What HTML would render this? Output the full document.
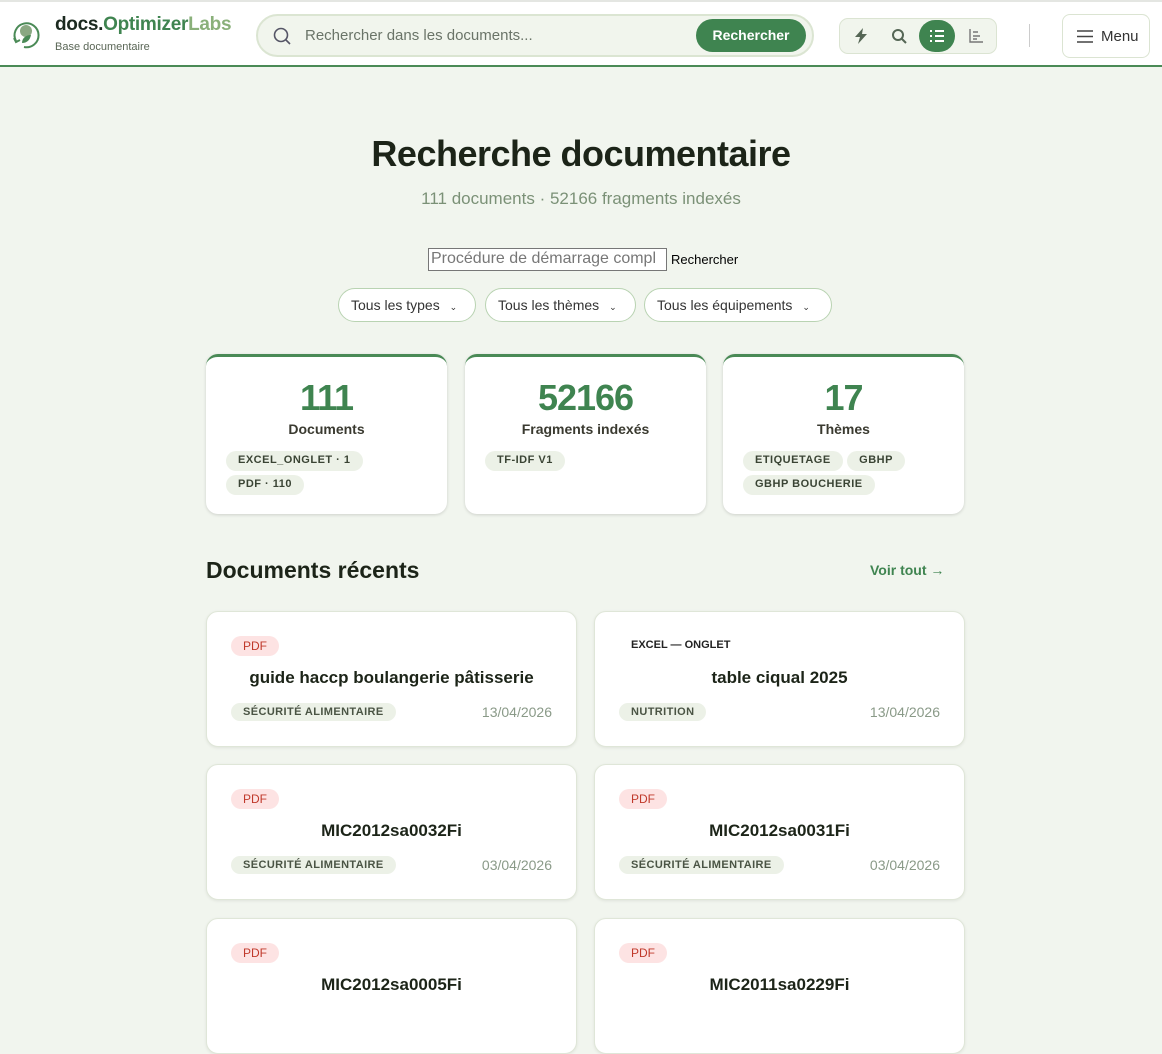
<!DOCTYPE html>
<html><head><meta charset="utf-8"><style>
*{box-sizing:border-box;margin:0;padding:0}
body{width:1162px;height:998px;overflow:hidden;background:#f1f5ee;font-family:"Liberation Sans",sans-serif;color:#1c2418;position:relative}
.hdr{position:absolute;left:0;top:0;width:1162px;height:67px;background:#fff;border-top:2px solid #e4e6e2;border-bottom:2px solid #4a8a56}
.abs{position:absolute}
.search{left:256px;top:12px;width:558px;height:43px;border:2px solid #dbe5d2;border-radius:22px;background:#f1f5ed}
.btn{position:absolute;right:6px;top:3px;width:110px;height:33px;background:#3f8450;color:#fff;border-radius:17px;font-weight:bold;font-size:14px;text-align:center;line-height:33px}
.tools{left:839px;top:16px;width:158px;height:36px;border:1px solid #dbe4d2;border-radius:9px;background:#f1f5ed}
.menu{left:1062px;top:12px;width:88px;height:44px;border:1px solid #dbe4d2;border-radius:8px;background:#fff;font-size:15px;color:#333}
.stat{position:absolute;top:354px;width:241px;height:160px;background:#fff;border-radius:12px;border-top:3px solid #4a8a56;box-shadow:0 1px 3px rgba(0,0,0,.15);text-align:center}
.stat .n{font-size:36px;font-weight:bold;color:#3f8450;margin-top:20px;letter-spacing:-1px}
.stat .l{font-size:14px;font-weight:bold;color:#3a3a30;margin-top:2px}
.tags{text-align:left;padding:0 20px;margin-top:13px}
.tag{display:inline-block;background:#ecf1e7;border-radius:10px;font-size:11px;font-weight:bold;color:#3a4434;padding:3px 12px;height:20px;margin:0 0 3px 0;letter-spacing:.5px}
.doc{position:absolute;width:371px;height:136px;background:#fff;border-radius:12px;border:1px solid #dfe6d8;box-shadow:0 1px 3px rgba(0,0,0,.08)}
.pdf{position:absolute;left:24px;top:24px;background:#fde3e3;color:#c0392b;font-size:12px;padding:3px 12px;border-radius:10px}
.xl{position:absolute;left:36px;top:27px;font-size:11px;font-weight:bold;color:#222}
.t{position:absolute;left:0;right:0;top:56px;text-align:center;font-size:17px;font-weight:bold;color:#1c2418}
.th{position:absolute;left:24px;top:91px;background:#ecf1e7;font-size:11px;font-weight:bold;color:#4a5444;padding:3px 12px;border-radius:10px;letter-spacing:.4px}
.dt{position:absolute;right:24px;top:92px;font-size:14px;color:#8a9a88}
.sel{position:absolute;top:288px;height:34px;border:1px solid #b9d3b2;border-radius:17px;background:#fff;font-size:14px;color:#333;line-height:32px;padding-left:12px}
</style></head><body>
<div class="hdr">
<svg class="abs" style="left:10px;top:17px" width="32" height="32" viewBox="0 0 32 32"><path d="M6 22A12 12 0 1 1 14 28" fill="none" stroke="#4a8a56" stroke-width="2"/><path d="M4 19l2 4 4-2" fill="none" stroke="#4a8a56" stroke-width="2"/><circle cx="16" cy="12" r="6" fill="#8aa882"/><path d="M12 24c0-5 4-8 9-8-1 5-4 8-9 8z" fill="#4a8a56"/></svg>
<div class="abs" style="left:55px;top:12px;font-size:19px;font-weight:bold;letter-spacing:-.3px"><span style="color:#1c2a20">docs.</span><span style="color:#3f8450">Optimizer</span><span style="color:#8ab07a">Labs</span></div>
<div class="abs" style="left:55px;top:39px;font-size:11px;color:#5a6656">Base documentaire</div>
<div class="abs search"><svg class="abs" style="left:14px;top:10px" width="20" height="20" viewBox="0 0 20 20"><circle cx="9" cy="9" r="6.5" fill="none" stroke="#556" stroke-width="1.6"/><path d="M14 14l4 4" stroke="#556" stroke-width="1.6"/></svg><div class="abs" style="left:47px;top:11px;font-size:15px;color:#6a7468">Rechercher dans les documents...</div><div class="btn">Rechercher</div></div>
<div class="abs tools">
<svg class="abs" style="left:14px;top:9px" width="14" height="16" viewBox="0 0 14 16"><path d="M9 0L1 9h5l-2 7 9-10H8z" fill="#556655"/></svg>
<svg class="abs" style="left:51px;top:9px" width="16" height="16"><circle cx="7" cy="7" r="5" fill="none" stroke="#556655" stroke-width="2"/><path d="M11 11l4 4" stroke="#556655" stroke-width="2"/></svg>
<div class="abs" style="left:79px;top:1px;width:36px;height:32px;background:#3f8450;border-radius:16px"><svg class="abs" style="left:10px;top:9px" width="16" height="14"><path d="M6 2h9M6 7h9M6 12h9M1 2h2M1 7h2M1 12h2" stroke="#fff" stroke-width="2"/></svg></div>
<svg class="abs" style="left:128px;top:9px" width="16" height="16"><path d="M2 1v13h13M5 4h5M5 8h7M5 11h4" stroke="#777" stroke-width="1.4" fill="none"/></svg>
</div>
<div class="abs" style="left:1029px;top:22px;width:1px;height:23px;background:#ccc"></div>
<div class="abs menu"><svg class="abs" style="left:14px;top:15px" width="16" height="13"><path d="M0 1h16M0 6.5h16M0 12h16" stroke="#444" stroke-width="1.6"/></svg><div class="abs" style="left:38px;top:13px">Menu</div></div>
</div>
<div class="abs" style="left:0;width:1162px;top:133px;text-align:center;font-size:36px;font-weight:bold;color:#1c2418;letter-spacing:-.5px">Recherche documentaire</div>
<div class="abs" style="left:0;width:1162px;top:189px;text-align:center;font-size:17px;color:#7b9177">111 documents · 52166 fragments indexés</div>
<div class="abs" style="left:428px;top:248px;width:239px;height:23px;border:1px solid #777;background:#fff;font-size:16px;color:#777;padding:1px 2px;white-space:nowrap;overflow:hidden">Procédure de démarrage compl</div>
<div class="abs" style="left:671px;top:252px;font-size:13px;color:#000">Rechercher</div>
<div class="sel" style="left:338px;width:138px">Tous les types <span style="font-size:9px;margin-left:6px">⌄</span></div>
<div class="sel" style="left:485px;width:151px">Tous les thèmes <span style="font-size:9px;margin-left:6px">⌄</span></div>
<div class="sel" style="left:644px;width:188px">Tous les équipements <span style="font-size:9px;margin-left:6px">⌄</span></div>
<div class="stat" style="left:206px"><div class="n">111</div><div class="l">Documents</div><div class="tags"><span class="tag">EXCEL_ONGLET · 1</span><br><span class="tag">PDF · 110</span></div></div>
<div class="stat" style="left:465px"><div class="n">52166</div><div class="l">Fragments indexés</div><div class="tags"><span class="tag">TF-IDF V1</span></div></div>
<div class="stat" style="left:723px"><div class="n">17</div><div class="l">Thèmes</div><div class="tags"><span class="tag">ETIQUETAGE</span> <span class="tag">GBHP</span><br><span class="tag">GBHP BOUCHERIE</span></div></div>
<div class="abs" style="left:206px;top:557px;font-size:23px;font-weight:bold;color:#1c2418">Documents récents</div>
<div class="abs" style="left:870px;top:562px;font-size:14px;font-weight:bold;color:#3f8450">Voir tout →</div>
<div class="doc" style="left:206px;top:611px"><span class="pdf">PDF</span><div class="t">guide haccp boulangerie pâtisserie</div><span class="th">SÉCURITÉ ALIMENTAIRE</span><span class="dt">13/04/2026</span></div>
<div class="doc" style="left:594px;top:611px"><span class="xl">EXCEL — ONGLET</span><div class="t">table ciqual 2025</div><span class="th">NUTRITION</span><span class="dt">13/04/2026</span></div>
<div class="doc" style="left:206px;top:764px"><span class="pdf">PDF</span><div class="t">MIC2012sa0032Fi</div><span class="th">SÉCURITÉ ALIMENTAIRE</span><span class="dt">03/04/2026</span></div>
<div class="doc" style="left:594px;top:764px"><span class="pdf">PDF</span><div class="t">MIC2012sa0031Fi</div><span class="th">SÉCURITÉ ALIMENTAIRE</span><span class="dt">03/04/2026</span></div>
<div class="doc" style="left:206px;top:918px"><span class="pdf">PDF</span><div class="t">MIC2012sa0005Fi</div></div>
<div class="doc" style="left:594px;top:918px"><span class="pdf">PDF</span><div class="t">MIC2011sa0229Fi</div></div>
</body></html>
